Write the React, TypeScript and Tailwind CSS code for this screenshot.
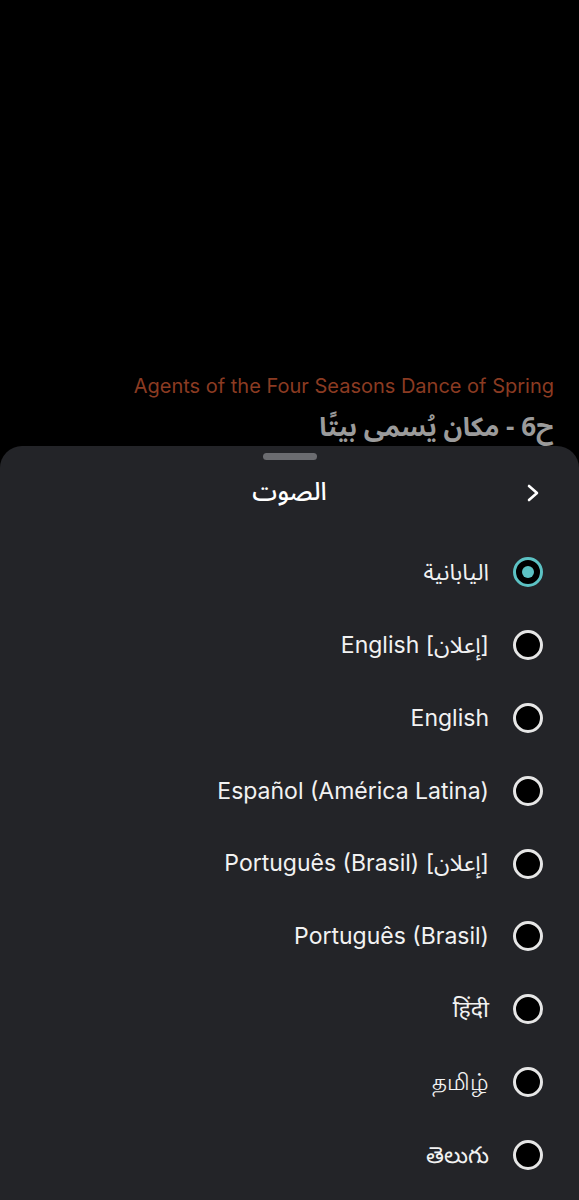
import React from 'react'

const langs = [
  { label: 'اليابانية', selected: true },
  { label: 'English [إعلان]' },
  { label: 'English' },
  { label: 'Español (América Latina)' },
  { label: 'Português (Brasil) [إعلان]' },
  { label: 'Português (Brasil)' },
  { label: 'हिंदी' },
  { label: 'தமிழ்' },
  { label: 'తెలుగు' },
]

function Radio({ selected }: { selected?: boolean }) {
  if (selected) {
    return (
      <span className="flex h-[30px] w-[30px] shrink-0 items-center justify-center rounded-full border-[3px] border-[#5cc2c4] bg-black">
        <span className="h-[12px] w-[12px] rounded-full bg-[#5cc2c4]" />
      </span>
    )
  }
  return <span className="block h-[30px] w-[30px] shrink-0 rounded-full border-[3px] border-[#e6e6e6] bg-black" />
}

export default function App() {
  return (
    <div className="flex h-[1200px] flex-col overflow-hidden bg-black font-['Inter','Noto_Sans_Arabic','Noto_Sans',sans-serif]">
      <div className="flex h-[446px] flex-col items-end justify-end pr-[25px]">
        <p className="text-[20px] leading-[28px] text-[#8b3b22]">Agents of the Four Seasons Dance of Spring</p>
        <p dir="rtl" className="mt-[10px] text-[26px] font-bold leading-[36px] text-[#9b9b9b] font-['Noto_Sans_Arabic','Noto_Sans','DejaVu_Sans',sans-serif]">
          ح6 - مكان يُسمى بيتًا
        </p>
      </div>
      <div dir="rtl" className="flex-1 rounded-t-[22px] bg-[#232428]">
        <div className="flex justify-center pt-[7px]">
          <span className="h-[7px] w-[54px] rounded-full bg-[#6b6c70]" />
        </div>
        <div className="relative flex h-[66px] items-center justify-center">
          <span className="text-[25px] font-medium text-white font-['Noto_Sans_Arabic','Noto_Sans','DejaVu_Sans',sans-serif]">الصوت</span>
          <svg className="absolute right-[38px] top-[23px]" width="16" height="20" viewBox="0 0 16 20" fill="none">
            <path d="M4 3l8 7-8 7" stroke="white" strokeWidth="2.6" strokeLinecap="round" strokeLinejoin="round" />
          </svg>
        </div>
        <div className="mt-[10px] flex flex-col">
          {langs.map((l) => (
            <div key={l.label} className="flex h-[72.8px] items-center gap-[24px] pr-[36px]">
              <Radio selected={l.selected} />
              <span dir="auto" className="text-[23px] text-[#f2f2f2]">{l.label}</span>
            </div>
          ))}
        </div>
      </div>
    </div>
  )
}
